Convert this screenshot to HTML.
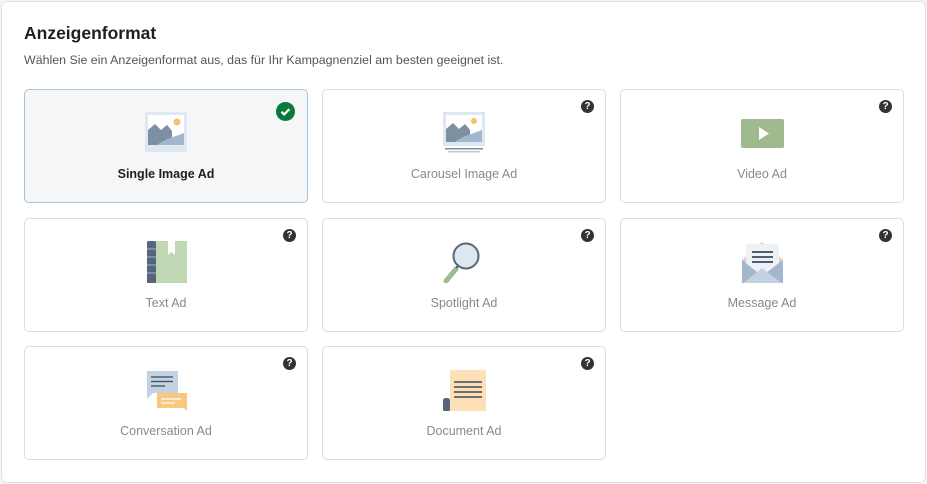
<!DOCTYPE html>
<html><head><meta charset="utf-8"><style>
*{box-sizing:border-box;margin:0;padding:0}
body{width:927px;height:484px;background:#f3f4f6;font-family:"Liberation Sans",sans-serif;position:relative;overflow:hidden}
.panel{position:absolute;left:1px;top:1px;width:925px;height:482px;background:#fff;border:1px solid #e3e3e3;border-radius:6px}
h1{position:absolute;left:24px;top:23px;font-size:17.5px;font-weight:bold;color:#1f1f1f}
.sub{position:absolute;left:24px;top:53px;font-size:12.4px;color:#555}
.card{position:absolute;width:284px;height:114px;border:1px solid #dcdcdc;border-radius:5px;background:#fff}
.card.sel{background:#f4f6f8;border-color:#a9c2dc}
.card .lab{position:absolute;left:0;right:0;top:77px;text-align:center;font-size:12.5px;color:#8a8a8a}
.card.sel .lab{color:#1f1f1f;font-weight:bold}
.card svg.ic{position:absolute;left:120px;top:20px}
.q{position:absolute;right:11px;top:10px;width:13px;height:13px;border-radius:50%;background:#333;color:#fff;font-size:10px;font-weight:bold;text-align:center;line-height:13px}
.chk{position:absolute;right:12px;top:12px;width:19px;height:19px;border-radius:50%;background:#0a7a3a}
</style></head><body>
<div class="panel"></div>
<h1>Anzeigenformat</h1>
<div class="sub">Wählen Sie ein Anzeigenformat aus, das für Ihr Kampagnenziel am besten geeignet ist.</div>

<div class="card sel" style="left:24px;top:89px">
<svg class="ic" width="44" height="44" viewBox="0 0 44 44"><rect x="0" y="2" width="42" height="40" fill="#dfe7f0"/><rect x="3" y="5" width="36" height="30" fill="#fff"/><circle cx="32" cy="12" r="3.5" fill="#f5c16c"/><path d="M3 35V20l7-6 6 6 6-5 5 6v14z" fill="#7d8fa3"/><path d="M12 35c8-6 14-7 27-12v12z" fill="#a3b6cb"/></svg>
<div class="chk"><svg width="19" height="19" viewBox="0 0 19 19"><path d="M5.5 9.8l2.6 2.6 5.3-5.3" stroke="#fff" stroke-width="2.2" fill="none"/></svg></div>
<div class="lab">Single Image Ad</div></div>

<div class="card" style="left:322px;top:89px">
<svg class="ic" width="44" height="44" viewBox="0 0 44 44"><rect x="0" y="2" width="42" height="34" fill="#dfe7f0"/><rect x="3" y="5" width="36" height="27" fill="#fff"/><circle cx="31" cy="11" r="3" fill="#f5c16c"/><path d="M3 32V19l7-6 6 6 6-5 5 6v12z" fill="#7d8fa3"/><path d="M12 32c8-6 14-7 27-12v12z" fill="#a3b6cb"/><rect x="2" y="38" width="38" height="1.5" fill="#7d8fa3"/><rect x="5" y="41" width="32" height="1.5" fill="#b8c8d8"/></svg>
<div class="q">?</div><div class="lab">Carousel Image Ad</div></div>

<div class="card" style="left:620px;top:89px">
<svg class="ic" width="44" height="44" viewBox="0 0 44 44"><rect x="0" y="9" width="43" height="29" rx="2" fill="#9eba8e"/><path d="M18 17v13l10-6.5z" fill="#fff"/></svg>
<div class="q">?</div><div class="lab">Video Ad</div></div>

<div class="card" style="left:24px;top:218px">
<svg class="ic" width="44" height="44" viewBox="0 0 44 44"><rect x="2" y="2" width="40" height="43" fill="#bfd8b3"/><rect x="2" y="2" width="9" height="43" rx="2" fill="#56667a"/><path d="M2 10h9M2 18h9M2 26h9M2 34h9" stroke="#a3b6cb" stroke-width="1"/><path d="M23 2h7v14l-3.5-3-3.5 3z" fill="#fff"/></svg>
<div class="q">?</div><div class="lab">Text Ad</div></div>

<div class="card" style="left:322px;top:218px">
<svg class="ic" width="44" height="44" viewBox="0 0 44 44"><path d="M3 42l10-12" stroke="#9eba8e" stroke-width="5" stroke-linecap="round"/><circle cx="23" cy="17" r="12.5" fill="#dfe7f0" stroke="#56667a" stroke-width="2"/><path d="M13 29l3-3" stroke="#56667a" stroke-width="2"/></svg>
<div class="q">?</div><div class="lab">Spotlight Ad</div></div>

<div class="card" style="left:620px;top:218px">
<svg class="ic" width="44" height="44" viewBox="0 0 44 44"><path d="M1 21L21 3l21 18z" fill="#f6c7b4"/><rect x="1" y="21" width="41" height="24" fill="#c2d2e1"/><rect x="5" y="5" width="33" height="28" fill="#eef2f7"/><path d="M11 13h21M11 18h21M11 23h21" stroke="#3d4a5a" stroke-width="1.8"/><path d="M1 21l20 16 21-16v24H1z" fill="#a3b6cb"/><path d="M1 45l20-16 21 16z" fill="#c2d2e1"/></svg>
<div class="q">?</div><div class="lab">Message Ad</div></div>

<div class="card" style="left:24px;top:346px">
<svg class="ic" width="44" height="44" viewBox="0 0 44 44"><path d="M2 4h31v22H8l-6 6z" fill="#c2d2e1"/><path d="M6 10h22M6 14.5h22M6 19h14" stroke="#3d4a5a" stroke-width="1.3"/><path d="M12 26h30v18l-3-3H12z" fill="#f7c87e"/><path d="M16 32h20M16 36h14" stroke="#fff" stroke-width="1.3"/></svg>
<div class="q" style="top:10px">?</div><div class="lab">Conversation Ad</div></div>

<div class="card" style="left:322px;top:346px">
<svg class="ic" width="44" height="44" viewBox="0 0 44 44"><rect x="7" y="3" width="36" height="42" rx="1" fill="#fde0b7"/><path d="M11 15h28M11 20h28M11 25h28M11 30h28" stroke="#3d4a5a" stroke-width="1.4"/><rect x="0" y="31" width="7" height="14" rx="2.5" fill="#56667a"/></svg>
<div class="q">?</div><div class="lab">Document Ad</div></div>
</body></html>
